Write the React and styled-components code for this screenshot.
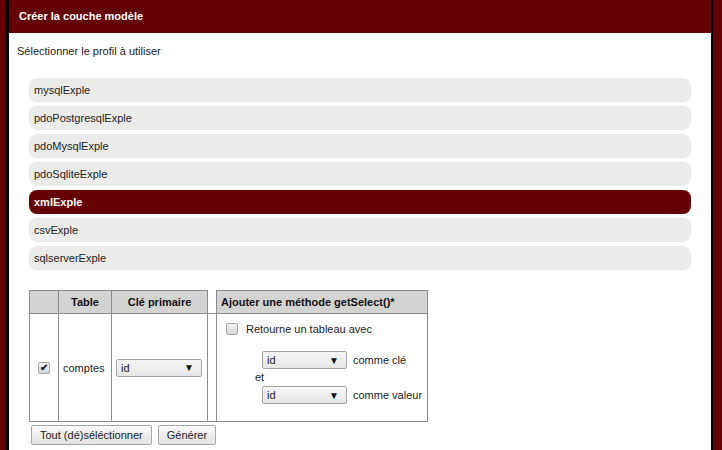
import React from "react";
import styled, { createGlobalStyle } from "styled-components";

const GlobalStyle = createGlobalStyle`
  html, body {
    margin: 0;
    padding: 0;
    background: #640003;
    font-family: "Liberation Sans", Arial, sans-serif;
    font-size: 11px;
    color: #222;
  }
`;

const profiles = [
  "mysqlExple",
  "pdoPostgresqlExple",
  "pdoMysqlExple",
  "pdoSqliteExple",
  "xmlExple",
  "csvExple",
  "sqlserverExple",
];

const Panel = styled.div`
  margin-left: 9px;
  width: 702px;
  min-height: 450px;
  background: #fff;
  box-shadow: -3px 0 0 #000, 2px 0 0 #000;
`;

const Header = styled.div`
  height: 33px;
  line-height: 33px;
  padding-left: 10px;
  background: #640003;
  color: #fff;
  font-weight: bold;
  font-size: 11px;
`;

const Intro = styled.p`
  margin: 0;
  padding: 11px 8px 0;
  line-height: 14px;
`;

const ProfileList = styled.ul`
  list-style: none;
  margin: 20px 20px 0;
  padding: 0;
  display: flex;
  flex-direction: column;
  gap: 4px;
`;

const ProfileItem = styled.li`
  height: 24px;
  line-height: 24px;
  padding-left: 5px;
  border-radius: 8px;
  background: ${(p) => (p.$active ? "#640003" : "#ebece9")};
  color: ${(p) => (p.$active ? "#fff" : "#222")};
  font-weight: ${(p) => (p.$active ? "bold" : "normal")};
`;

const Form = styled.div`
  margin: 20px 20px 0;
`;

const Grid = styled.table`
  border-collapse: collapse;
  table-layout: fixed;
  width: 399px;
`;

const Th = styled.th`
  height: 22px;
  padding: 0 4px;
  background: ${(p) => (p.$blank ? "#fff" : "#d3d3d2")};
  border: 1px solid #8c8c8c;
  ${(p) => p.$blank && "border-top: none;"}
  font-weight: bold;
  font-size: 11px;
  text-align: ${(p) => (p.$left ? "left" : "center")};
  white-space: nowrap;
  color: #111;
`;

const Td = styled.td`
  height: 107px;
  padding: 0 4px;
  border: 1px solid #8c8c8c;
  vertical-align: ${(p) => (p.$top ? "top" : "middle")};
  text-align: ${(p) => (p.$center ? "center" : "left")};
`;

const Check = styled.span`
  display: inline-block;
  box-sizing: border-box;
  width: 12px;
  height: 12px;
  border: 1px solid #a8a8a8;
  border-radius: 2px;
  background: linear-gradient(#f4f4f4, #d6d6d6);
  vertical-align: middle;
  color: #222;
  font-size: 10px;
  font-weight: bold;
  line-height: 10px;
  text-align: center;
`;

const Select = styled.span`
  display: inline-flex;
  align-items: center;
  justify-content: space-between;
  box-sizing: border-box;
  width: ${(p) => p.$w}px;
  height: 18px;
  padding: 0 7px 0 4px;
  border: 1px solid #a6a6a6;
  border-radius: 2px;
  background: linear-gradient(#f7f7f7, #e6e6e6);
  vertical-align: middle;
  font-size: 11px;
`;

const Arrow = styled.span`
  font-size: 10px;
  color: #111;
`;

const Option = styled.label`
  display: flex;
  align-items: center;
  gap: 8px;
  margin: 9px 0 0 5px;
`;

const Mapping = styled.div`
  margin: 16px 0 0 41px;
  display: grid;
  grid-template-columns: auto auto;
  justify-content: start;
  align-items: center;
  column-gap: 6px;
`;

const MapLabel = styled.span`
  white-space: nowrap;
`;

const And = styled.span`
  grid-column: 1 / span 2;
  margin-left: -7px;
  line-height: 12px;
  padding: 2px 0 3px;
`;

const Actions = styled.div`
  display: flex;
  gap: 6px;
  margin: 3px 0 0 2px;
`;

const Button = styled.button`
  height: 20px;
  padding: 0 8px;
  border: 1px solid #a6a6a6;
  border-radius: 2px;
  background: linear-gradient(#f8f8f8, #e3e3e3);
  font-family: "Liberation Sans", Arial, sans-serif;
  font-size: 11px;
  color: #222;
`;

const Dropdown = ({ width }) => (
  <Select $w={width}>
    id<Arrow>▼</Arrow>
  </Select>
);

export default function App() {
  return (
    <>
      <GlobalStyle />
      <Panel>
        <Header>Créer la couche modèle</Header>
        <Intro>Sélectionner le profil à utiliser</Intro>
        <ProfileList>
          {profiles.map((name) => (
            <ProfileItem key={name} $active={name === "xmlExple"}>
              {name}
            </ProfileItem>
          ))}
        </ProfileList>
        <Form>
          <Grid>
            <colgroup>
              <col style={{ width: 29 }} />
              <col style={{ width: 53 }} />
              <col style={{ width: 96 }} />
              <col style={{ width: 9 }} />
              <col style={{ width: 211 }} />
            </colgroup>
            <thead>
              <tr>
                <Th />
                <Th>Table</Th>
                <Th>Clé primaire</Th>
                <Th $blank />
                <Th $left>Ajouter une méthode getSelect()*</Th>
              </tr>
            </thead>
            <tbody>
              <tr>
                <Td $center>
                  <Check>✔</Check>
                </Td>
                <Td>comptes</Td>
                <Td>
                  <Dropdown width={86} />
                </Td>
                <Td />
                <Td $top>
                  <Option>
                    <Check />
                    Retourne un tableau avec
                  </Option>
                  <Mapping>
                    <Dropdown width={85} />
                    <MapLabel>comme clé</MapLabel>
                    <And>et</And>
                    <Dropdown width={85} />
                    <MapLabel>comme valeur</MapLabel>
                  </Mapping>
                </Td>
              </tr>
            </tbody>
          </Grid>
          <Actions>
            <Button>Tout (dé)séléctionner</Button>
            <Button>Générer</Button>
          </Actions>
        </Form>
      </Panel>
    </>
  );
}
